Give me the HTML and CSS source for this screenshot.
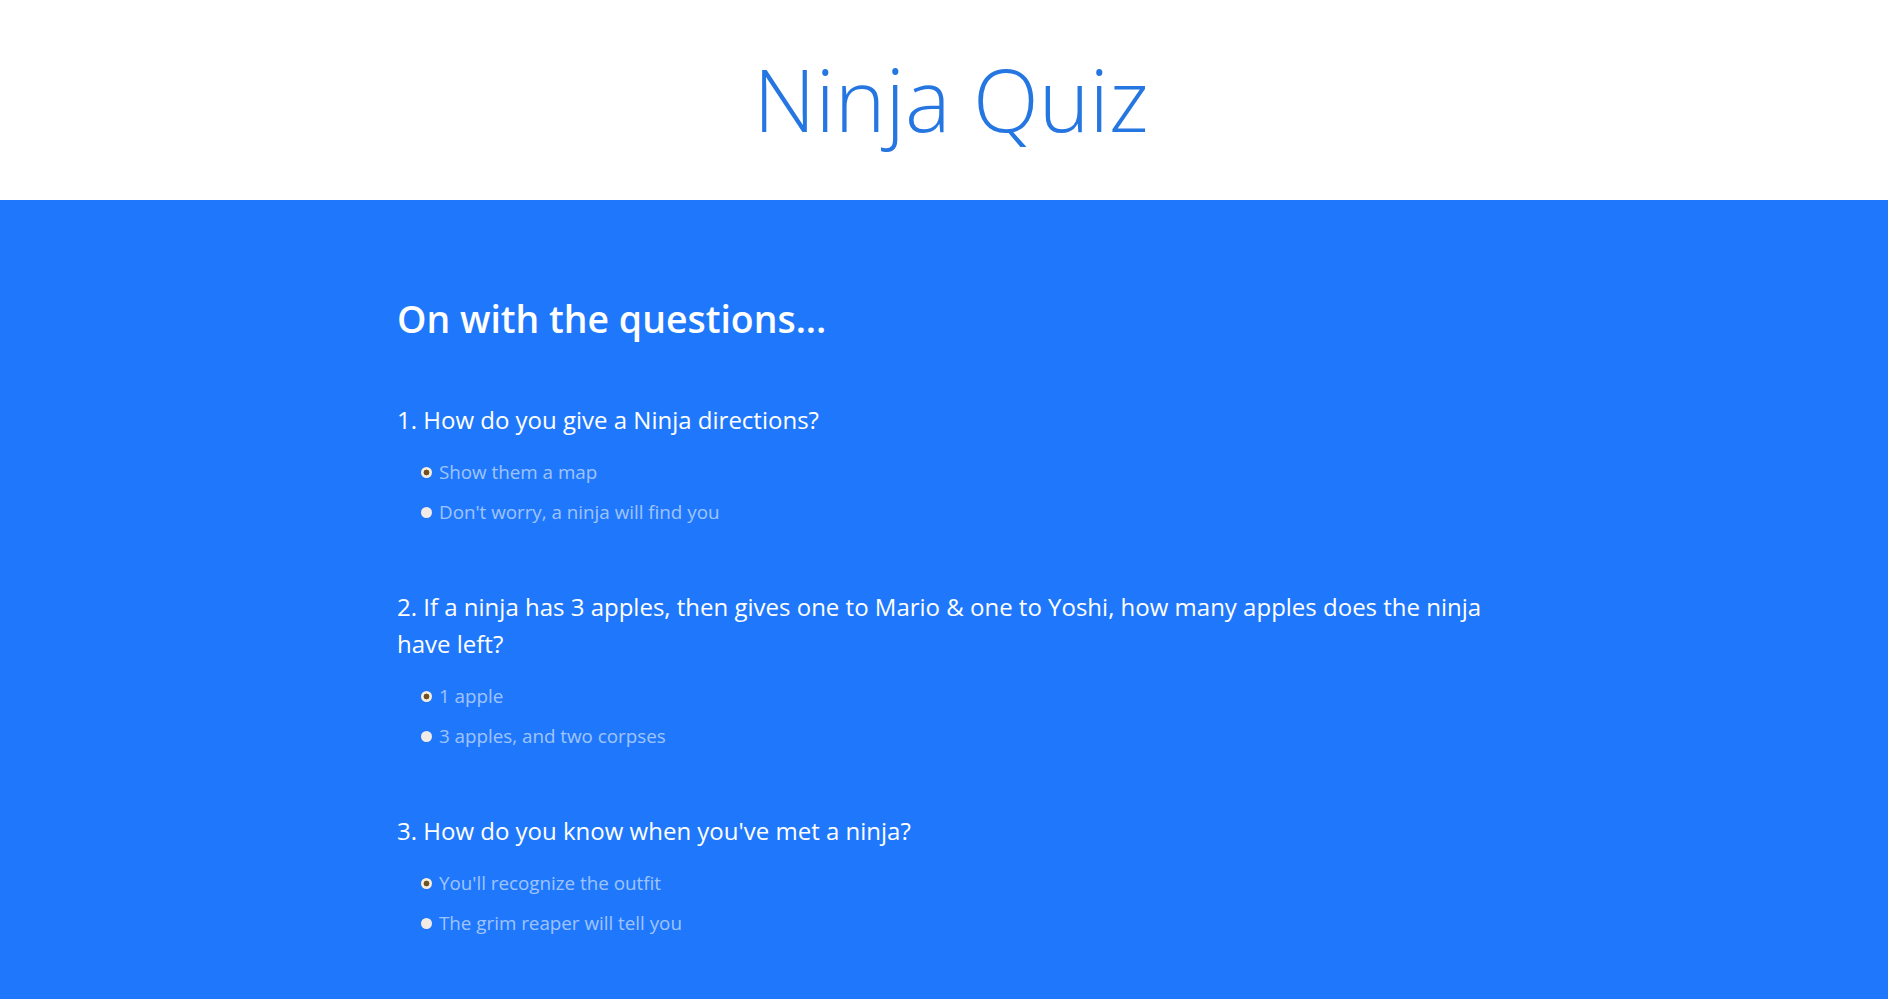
FILE: index.html
```html
<!DOCTYPE html>
<html lang="en">
<head>
<meta charset="utf-8">
<title>Ninja Quiz</title>
<link rel="stylesheet" href="styles.css">
</head>
<body>
<header class="site-header">
  <h1 class="title">Ninja Quiz</h1>
</header>
<main class="quiz">
  <div class="container">
    <h2 class="intro">On with the questions...</h2>
    <form class="questions">
      <div class="question">
        <p class="q-text">1. How do you give a Ninja directions?</p>
        <label class="option"><input type="radio" name="q1" value="A" checked><span>Show them a map</span></label>
        <label class="option"><input type="radio" name="q1" value="B"><span>Don't worry, a ninja will find you</span></label>
      </div>
      <div class="question">
        <p class="q-text">2. If a ninja has 3 apples, then gives one to Mario &amp; one to Yoshi, how many apples does the ninja have left?</p>
        <label class="option"><input type="radio" name="q2" value="A" checked><span>1 apple</span></label>
        <label class="option"><input type="radio" name="q2" value="B"><span>3 apples, and two corpses</span></label>
      </div>
      <div class="question">
        <p class="q-text">3. How do you know when you've met a ninja?</p>
        <label class="option"><input type="radio" name="q3" value="A" checked><span>You'll recognize the outfit</span></label>
        <label class="option"><input type="radio" name="q3" value="B"><span>The grim reaper will tell you</span></label>
      </div>
    </form>
  </div>
</main>
</body>
</html>
```

FILE: styles.css
```css
* { box-sizing: border-box; }
html, body { margin: 0; padding: 0; }
body {
  font-family: "Open Sans", "Noto Sans", sans-serif;
  background: #1f78fc;
  color: #fff;
}
.site-header {
  background: #fff;
  height: 200px;
  display: flex;
  align-items: center;
  justify-content: center;
  padding-left: 14px;
}
.title {
  margin: 0;
  font-weight: 300;
  font-size: 86px;
  color: #2676e2;
  line-height: 1;
  padding-bottom: 2px;
}
.quiz {
  background: #1f78fc;
  padding: 91px 0 40px;
}
.container {
  width: 1094px;
  margin: 0 auto;
}
.intro {
  margin: 0 0 54px;
  font-size: 37.4px;
  font-weight: 600;
  line-height: 56px;
}
.question {
  margin-bottom: 56px;
}
.question:last-child {
  margin-bottom: 0;
}
.q-text {
  margin: 0 0 14px;
  font-size: 24px;
  line-height: 37px;
}
.option {
  display: flex;
  align-items: center;
  height: 40px;
  padding-left: 24px;
  color: rgba(255,255,255,0.58);
  font-size: 18.8px;
}
.option input {
  appearance: none;
  -webkit-appearance: none;
  width: 11px;
  height: 11px;
  margin: 0 7px 0 0;
  border-radius: 50%;
  background: #f3ece6;
  border: none;
  flex: none;
}
.option input:checked {
  background: radial-gradient(circle, #6e5223 0 2.6px, #f6eddb 3.2px);
}
```
